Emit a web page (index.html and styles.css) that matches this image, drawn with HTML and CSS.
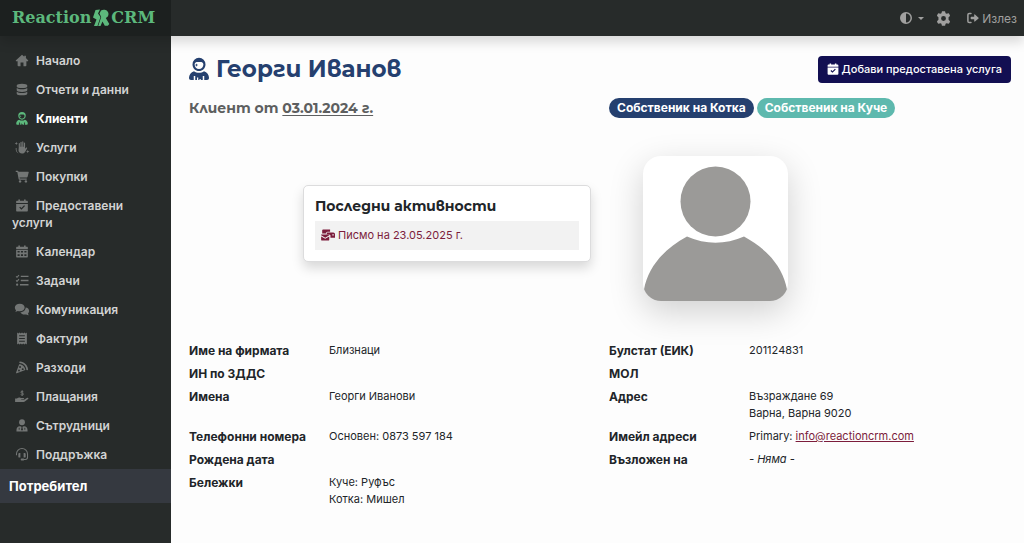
FILE: index.html
```html
<!DOCTYPE html>
<html lang="bg">
<head>
<meta charset="utf-8">
<meta name="viewport" content="width=device-width, initial-scale=1">
<title>Георги Иванов – ReactionCRM</title>
<link rel="stylesheet" href="styles.css">
</head>
<body>
<svg class="sprite" aria-hidden="true">
  <symbol id="home" viewBox="0 0 16 16"><path d="M8 1 0.6 7.6c-.5.5-.2 1.2.5 1.2h1.5V14c0 .6.4 1 1 1h2.6v-4.4h3.6V15h2.6c.6 0 1-.4 1-1V8.800h1.500c.7 0 1-.7.5-1.200L12.800 5V2h-2v1.400z"/></symbol>
  <symbol id="data" viewBox="0 0 16 16"><path d="M1.500 3C1.500 1.700 4.400.8 8 .8s6.500.9 6.500 2.200v1.300C14.500 5.500 11.600 6.300 8 6.300s-6.500-.8-6.500-2zM1.500 6c1.300 1.100 3.700 1.600 6.500 1.600S13.200 7.100 14.500 6v3c0 1.200-2.900 2-6.500 2s-6.500-.8-6.500-2zM1.500 10.700c1.300 1.100 3.700 1.600 6.500 1.600s5.200-.5 6.500-1.600v2.500c0 1.200-2.900 2-6.500 2s-6.500-.8-6.500-2z"/></symbol>
  <symbol id="person" viewBox="0 0 16 18"><path fill-rule="evenodd" d="M8 0a5.200 5.200 0 0 1 5.200 5.300c0 3-2.400 5.300-5.200 5.300S2.800 8.300 2.800 5.300A5.200 5.200 0 0 1 8 0zM6 3.300c-1 .3-1.500 1-1.500 2.100C4.500 7.500 6 9 8 9s3.500-1.500 3.500-3.600c0-1-.5-1.800-1.500-2.100zM6 4.500l.4.900.9.400-.9.400-.4.900-.4-.9-.9-.4.900-.4zM4 10.700c1.200.8 2.500 1.200 4 1.200s2.800-.4 4-1.200c2.400.8 4 3 4 5.300 0 1.100-.6 1.800-1.600 1.800h-2.200v-3.300H3.800v3.300H1.600C.6 17.800 0 17.100 0 16c0-2.300 1.600-4.500 4-5.300zM5 14.500h6v3.300H9.400v-.9h-1v.9h-1v-2h-1v2H5z"/></symbol>
  <symbol id="hand" viewBox="0 0 18 16"><path d="M5 8V3.200c0-1 1.400-1 1.400 0V7h.7V1.600c0-1.100 1.500-1.100 1.500 0V7h.7V1.200c0-1 1.400-1 1.400 0V7h.7V2.500c0-1 1.400-1 1.400 0V9.600l1.100-1.400c.8-.8 1.900 0 1.300.9L13 13.100c-1 1.500-2.300 2.300-4 2.300-2.600 0-4.300-1.800-4.300-4zM2 1l.6 1.400L4 3l-1.400.6L2 5l-.6-1.400L0 3l1.400-.6zM16 11l.6 1.400L18 13l-1.400.6L16 15l-.6-1.400L14 13l1.400-.6zM2.300 8.500C2 11.500 3 14 5 15.300 2.500 14.500.8 11.700 1.300 8.500z"/></symbol>
  <symbol id="cart" viewBox="0 0 16 16"><path d="M.3.900h2.400c.4 0 .7.300.8.700l.1.500h12.100c.4 0 .7.400.6.800l-1.400 5.400c-.1.500-.5.800-1 .8H5l.3 1.300h8.500v1.500H4.700a.8.800 0 0 1-.8-.6L2.200 2.400H.3z"/><circle cx="5.600" cy="14" r="1.500"/><circle cx="12.800" cy="14" r="1.500"/></symbol>
  <symbol id="check-cal" viewBox="0 0 16 16"><path fill-rule="evenodd" d="M3.500.5h2V2h5V.5h2V2H14c.7 0 1.200.5 1.200 1.200V5H.8V3.200C.8 2.500 1.300 2 2 2h1.500zM.8 6h14.400v8.200c0 .8-.5 1.300-1.200 1.300H2c-.7 0-1.200-.5-1.200-1.300zm9.800 1.600L7.300 11 5.700 9.400l-1.100 1.100 2.700 2.600 4.400-4.400z"/></symbol>
  <symbol id="cal" viewBox="0 0 16 16"><path fill-rule="evenodd" d="M3.500.5h2V2h5V.5h2V2H14c.7 0 1.200.5 1.200 1.200V5H.8V3.200C.8 2.500 1.300 2 2 2h1.500zM.8 5.800h14.400v8.400c0 .8-.5 1.300-1.200 1.300H2c-.7 0-1.200-.5-1.200-1.300zm1.700 1.500v2h2.600v-2zm4.200 0v2h2.600v-2zm4.200 0v2h2.600v-2zm-8.400 4v2.200h2.600v-2.200zm4.200 0v2.200h2.600v-2.200zm4.200 0v2.200h2.600v-2.200z"/></symbol>
  <symbol id="tasks" viewBox="0 0 16 16"><path d="M6.500 2H16v1.800H6.500zM6.500 7.100H16v1.800H6.500zM5.500 12.200H16V14H5.500z"/><circle cx="2" cy="13.100" r="1.400"/><path d="m.7 2.800 1.200 1.300L4.300 1.400M.7 7.800l1.200 1.300 2.400-2.700" fill="none" stroke="currentColor" stroke-width="1.300"/></symbol>
  <symbol id="chat" viewBox="0 0 18 16"><path d="M6.300.8c3.400 0 6 2 6 4.700s-2.600 4.700-6 4.700c-.9 0-1.700-.1-2.400-.4-.9.700-2 1-3.300 1 .6-.6 1-1.300 1.100-2C.8 8 .2 6.800.2 5.500.2 2.800 2.900.8 6.300.8zM13.500 5.500c2.500.2 4.300 2 4.300 4.300 0 1.200-.5 2.300-1.400 3 .1.900.5 1.600 1 2.200-1.200 0-2.300-.4-3.200-1-2.900.8-6-.1-7.200-2.600 3.600-.2 6.500-2.600 6.500-5.900z"/></symbol>
  <symbol id="bill" viewBox="0 0 16 16"><path fill-rule="evenodd" d="M2 .7 3.500 1.700 5 .7l1.500 1L8 .7l1.500 1 1.500-1 1.500 1 1.500-1v14.600l-1.500-1-1.500 1-1.500-1-1.500 1-1.500-1-1.500 1-1.500-1-1.500 1zM4.500 4v1.200h7V4zm0 3.400v1.200h7V7.400zm0 3.400V12h7v-1.200z"/></symbol>
  <symbol id="pizza" viewBox="0 0 16 16"><path d="M5.500.7c-.5 0-.9.500-.8 1l.2.900c4.500.2 8.200 3.800 8.500 8.400l1 .3c.6.100 1.100-.300 1.100-.9C15.100 5.200 10.800.9 5.500.7z"/><path fill-rule="evenodd" d="M4.500 3.900c4.100 0 7.500 3.300 7.600 7.300L1.500 15.200c-.6.200-1-.3-.8-.9zm1.100 2.400a1.200 1.200 0 1 0 0 2.400 1.200 1.200 0 0 0 0-2.400zm3.300 2.500a1.200 1.200 0 1 0 0 2.400 1.200 1.200 0 0 0 0-2.400zM4.300 10.600a1.100 1.100 0 1 0 0 2.200 1.100 1.100 0 0 0 0-2.200z"/></symbol>
  <symbol id="pay" viewBox="0 0 18 16"><path d="M.5 10.500h2.200c1.500-1.300 2.800-1.500 4.100-1.100l1 .5h3c1.200 0 1.200 1.500 0 1.500H8v.5h3.500l3.900-2.400c1.300-.5 2 .8 1.100 1.600l-4 3.200c-.4.300-.9.500-1.400.5H.5z"/><path d="M10.700 2.200C9.800 1.500 7.500 1.400 7.500 2.700c0 1.400 3.400.8 3.400 2.300 0 1.400-2.500 1.400-3.500.6M9.200.3v7" fill="none" stroke="currentColor" stroke-width="1.100"/></symbol>
  <symbol id="staff" viewBox="0 0 16 16"><circle cx="8" cy="4" r="3.600"/><path fill-rule="evenodd" d="M5.300 9 7 9.200l.5 1.200-.8 3.400h2.600l-.8-3.400.5-1.200 1.700-.2c2.400 0 4.100 1.900 4.100 4.500v2H1.200v-2C1.200 10.900 2.900 9 5.300 9zM4 10.800v2.400h1v-2.400zm7 0v2.400h1v-2.400z"/></symbol>
  <symbol id="support" viewBox="0 0 16 16"><path d="M1.200 9V7.500a6.800 6.800 0 0 1 13.600 0v4c0 1.500-1.200 2.700-2.700 2.700H9.500" fill="none" stroke="currentColor" stroke-width="1.300"/><path d="M3.500 7.300c0-.7.500-1.100 1.200-1.100H6v5.600H4.700c-.7 0-1.200-.5-1.200-1.100zM10 6.200h1.300c.7 0 1.200.4 1.200 1.100v3.400c0 .6-.5 1.100-1.200 1.100H10zM7.500 13h2.800v2.400H7.500c-1.500 0-1.500-2.400 0-2.400z"/></symbol>
  <symbol id="contrast" viewBox="0 0 16 16"><path fill-rule="evenodd" d="M8 0a8 8 0 1 1 0 16A8 8 0 0 1 8 0zm0 2v12A6 6 0 0 0 8 2z"/></symbol>
  <symbol id="gear" viewBox="0 0 16 16"><path fill-rule="evenodd" d="M6.300.4C6.400.1 9.600.1 9.700.4l.5 2 1.100.6 2-.6c.4-.1 1.900 2.500 1.600 2.800L13.400 6.700v2.600l1.500 1.500c.3.300-1.200 2.900-1.600 2.800l-2-.6-1.100.6-.5 2c-.1.300-3.300.3-3.400 0l-.5-2L4.700 13l-2 .6c-.4.1-1.900-2.500-1.600-2.800l1.500-1.500V6.700L1.100 5.200c-.3-.3 1.200-2.900 1.600-2.800l2 .6 1.100-.6zM8 5.400a2.600 2.600 0 1 0 0 5.200 2.600 2.600 0 0 0 0-5.200z"/></symbol>
  <symbol id="exit" viewBox="0 0 16 16"><path d="M5.300 2H3a1.800 1.800 0 0 0-1.800 1.800v8.400C1.200 13.200 2 14 3 14h2.300" fill="none" stroke="currentColor" stroke-width="2" stroke-linecap="round"/><path d="M5.600 6.300h4V3.800c0-.6.600-.9 1-.5l4.800 4.200c.3.300.3.700 0 1l-4.800 4.200c-.4.400-1 .1-1-.5V9.700h-4c-.4 0-.7-.3-.7-.7V7c0-.4.300-.7.700-.7z"/></symbol>
  <symbol id="mail" viewBox="0 0 20 16"><path fill-rule="evenodd" d="M3 0h10v3.300H9.500C8 3.300 7 4.300 7 6H1.700V1.300C1.700.5 2.200 0 3 0zM8.200 4.600h9.300c1.400 0 2.500 1 2.500 2.500v4.700h-6.500V8.500c0-.5-.4-.9-.9-.9H8.200zm8 2.300v1.700h2V6.900zM.2 7.300h11.600v1.200L6 12 .2 8.500zM.2 10 6 13.500l5.800-3.500v4.700c0 .7-.5 1.300-1.200 1.300H1.400C.7 16 .2 15.400.2 14.700z"/></symbol>
</svg>

<header class="topbar">
  <a class="brand" href="#"><span>Reaction</span><svg class="brand-mark" viewBox="0 0 17 18" aria-hidden="true"><path d="M3 1 7.500.5 5.500 4.500 8 8 5 17H1.500L4 10.500.5 8.500z"/><path d="M8.500 1.500C11-.3 16 .8 16 5c0 2-1 3.300-2.700 4l3.500 6-1.500 1.700h-3L10 12.500 8 17H5.700l3-9L7 4.500z"/></svg><span>CRM</span></a>
  <div class="tools">
    <button class="tool theme" type="button" aria-label="Тема"><svg class="icon"><use href="#contrast"/></svg><span class="caret"></span></button>
    <button class="tool" type="button" aria-label="Настройки"><svg class="icon gear"><use href="#gear"/></svg></button>
    <a class="tool exit" href="#"><svg class="icon"><use href="#exit"/></svg>Излез</a>
  </div>
</header>

<div class="shell">
  <aside class="sidebar">
    <nav>
      <a class="item" href="#"><svg class="icon"><use href="#home"/></svg>Начало</a>
      <a class="item" href="#"><svg class="icon"><use href="#data"/></svg>Отчети и данни</a>
      <a class="item active" href="#"><svg class="icon"><use href="#person"/></svg>Клиенти</a>
      <a class="item" href="#"><svg class="icon"><use href="#hand"/></svg>Услуги</a>
      <a class="item" href="#"><svg class="icon"><use href="#cart"/></svg>Покупки</a>
      <a class="item" href="#"><svg class="icon"><use href="#check-cal"/></svg>Предоставени услуги</a>
      <a class="item" href="#"><svg class="icon"><use href="#cal"/></svg>Календар</a>
      <a class="item" href="#"><svg class="icon"><use href="#tasks"/></svg>Задачи</a>
      <a class="item" href="#"><svg class="icon"><use href="#chat"/></svg>Комуникация</a>
      <a class="item" href="#"><svg class="icon"><use href="#bill"/></svg>Фактури</a>
      <a class="item" href="#"><svg class="icon"><use href="#pizza"/></svg>Разходи</a>
      <a class="item" href="#"><svg class="icon"><use href="#pay"/></svg>Плащания</a>
      <a class="item" href="#"><svg class="icon"><use href="#staff"/></svg>Сътрудници</a>
      <a class="item" href="#"><svg class="icon"><use href="#support"/></svg>Поддръжка</a>
    </nav>
    <div class="user">Потребител</div>
  </aside>

  <main class="content">
    <div class="title-row">
      <h1><svg class="title-icon" aria-hidden="true"><use href="#person"/></svg>Георги Иванов</h1>
      <button class="primary" type="button"><svg class="icon"><use href="#check-cal"/></svg>Добави предоставена услуга</button>
    </div>
    <div class="halves since-row">
      <h2>Клиент от <u>03.01.2024 г.</u></h2>
      <div class="badges"><span class="badge cat">Собственик на Котка</span><span class="badge dog">Собственик на Куче</span></div>
    </div>
    <div class="halves profile-row">
      <section class="card">
        <h3>Последни активности</h3>
        <a class="activity" href="#"><svg class="mail"><use href="#mail"/></svg>Писмо на 23.05.2025 г.</a>
      </section>
      <svg class="avatar" viewBox="0 0 145 145" role="img" aria-label="Снимка на клиента"><circle cx="72.500" cy="45.500" r="35"/><path d="M44 80.500Q72.500 93 101 80.500C124 93 140 111 144 133.500V145H1V133.500C5 111 21 93 44 80.500Z"/></svg>
    </div>
    <dl class="details">
      <dt>Име на фирмата</dt><dd>Близнаци</dd>
      <dt>Булстат (ЕИК)</dt><dd>201124831</dd>
      <dt>ИН по ЗДДС</dt><dd></dd>
      <dt>МОЛ</dt><dd></dd>
      <dt>Имена</dt><dd>Георги Иванови</dd>
      <dt>Адрес</dt><dd>Възраждане 69<br>Варна, Варна 9020</dd>
      <dt>Телефонни номера</dt><dd>Основен: 0873 597 184</dd>
      <dt>Имейл адреси</dt><dd>Primary: <a href="mailto:info@reactioncrm.com">info@reactioncrm.com</a></dd>
      <dt>Рождена дата</dt><dd></dd>
      <dt>Възложен на</dt><dd><em>- Няма -</em></dd>
      <dt>Бележки</dt><dd>Куче: Руфъс<br>Котка: Мишел</dd>
    </dl>
  </main>
</div>
</body>
</html>
```

FILE: styles.css
```css
* { box-sizing: border-box; }
body {
  margin: 0;
  min-height: 100vh;
  display: flex;
  flex-direction: column;
  background: #fdfdfd;
  color: #212529;
  font: 12px/17px Inter, "Noto Sans", sans-serif;
}
h1, h2, h3, dl, dd { margin: 0; }
button { font: inherit; border: 0; cursor: pointer; }
a { color: inherit; }
svg { fill: currentColor; }
.sprite { display: none; }
.icon { flex: none; width: 12px; height: 12px; }

.topbar {
  position: relative;
  display: flex;
  height: 36px;
  justify-content: space-between;
  background: #272b2a;
  box-shadow: 0 6px 12px rgba(0, 0, 0, .15);
}
.brand {
  display: flex;
  align-items: center;
  gap: 1px;
  width: 171px;
  padding-left: 12px;
  background: #1c201f;
  color: #5cb87c;
  font: bold 16px/36px "DejaVu Serif", serif;
  text-decoration: none;
}
.brand-mark { flex: none; width: 18px; height: 18px; }
.tools { display: flex; align-items: center; padding-right: 7px; color: #a0a09f; }
.tool {
  display: flex;
  align-items: center;
  gap: 3px;
  padding: 0;
  background: none;
  color: inherit;
  text-decoration: none;
}
.theme { gap: 6px; margin-right: 12px; }
.caret { border: 3px solid transparent; border-top-color: currentColor; border-bottom: 0; }
.gear { width: 15px; height: 15px; }
.exit { margin-left: 16px; }

.shell { display: flex; flex: 1; }
.sidebar {
  flex: 0 0 171px;
  padding-top: 10px;
  background: #272b2a;
  color: #d2d3d3;
  font-weight: 600;
}
.item { display: block; padding: 6px 40px 6px 12px; text-decoration: none; }
.item .icon { width: 20px; height: 13px; margin-right: 4px; vertical-align: -2px; color: #737675; }
.item.active { color: #fff; font-weight: 700; }
.item.active .icon { color: #5cb87c; }
.user { padding: 9px; background: #353940; color: #fff; font-size: 13px; font-weight: 700; line-height: 16px; }

.content { flex: 1; padding: 18px 4px 18px 9px; }
.title-row { display: flex; justify-content: space-between; align-items: center; padding: 0 9px; }
h1, h2, h3 { font-family: Montserrat, Inter, "Noto Sans", sans-serif; font-weight: 700; }
h1 { display: flex; align-items: center; gap: 7px; color: #25406f; font-size: 23px; line-height: 30px; }
.title-icon { width: 20px; height: 24px; }
.primary {
  display: flex;
  align-items: center;
  gap: 3px;
  padding: 5px 9px;
  border-radius: 4px;
  background: #120f52;
  color: #fff;
  font-size: 11px;
  font-weight: 500;
}
.halves { display: grid; grid-template-columns: 1fr 1fr; }
.halves > * { margin: 0 9px; }
.since-row { margin-top: 14px; align-items: center; }
h2 { color: #5d5f60; font-size: 14px; line-height: 20px; }
h2 u { text-underline-offset: 2px; }
.badges { display: flex; flex-wrap: wrap; gap: 3px; }
.badge { padding: 2px 8px; border-radius: 10px; color: #fff; font-weight: 700; line-height: 16px; }
.cat { background: #25406f; }
.dog { background: #5eb9ae; }
.profile-row { margin: 38px 0 41px; align-items: center; }
.card {
  justify-self: end;
  width: 288px;
  margin-bottom: 11px;
  padding: 10px 11px 11px;
  border: 1px solid #dcdcdd;
  border-radius: 5px;
  background: #fff;
  box-shadow: 0 6px 12px rgba(0, 0, 0, .15);
}
h3 { font-size: 14px; line-height: 20px; }
.activity {
  display: flex;
  align-items: center;
  gap: 3px;
  margin-top: 5px;
  padding: 6px;
  background: #f2f2f2;
  color: #7c1d3c;
  font-size: 11px;
  text-decoration: none;
}
.mail { width: 14px; height: 12px; }
.avatar {
  width: 145px;
  height: 145px;
  margin-left: 43px;
  border-radius: 18px;
  background: #fff;
  color: #9b9a98;
  box-shadow: 0 11px 34px rgba(0, 0, 0, .18);
}
.details { display: grid; grid-template-columns: 1fr 2fr 1fr 2fr; row-gap: 6px; }
.details > * { min-width: 0; padding: 0 9px; }
dt { font-weight: 700; }
dd { font-size: 11px; }
dd a { color: #7c1d3c; }
```
